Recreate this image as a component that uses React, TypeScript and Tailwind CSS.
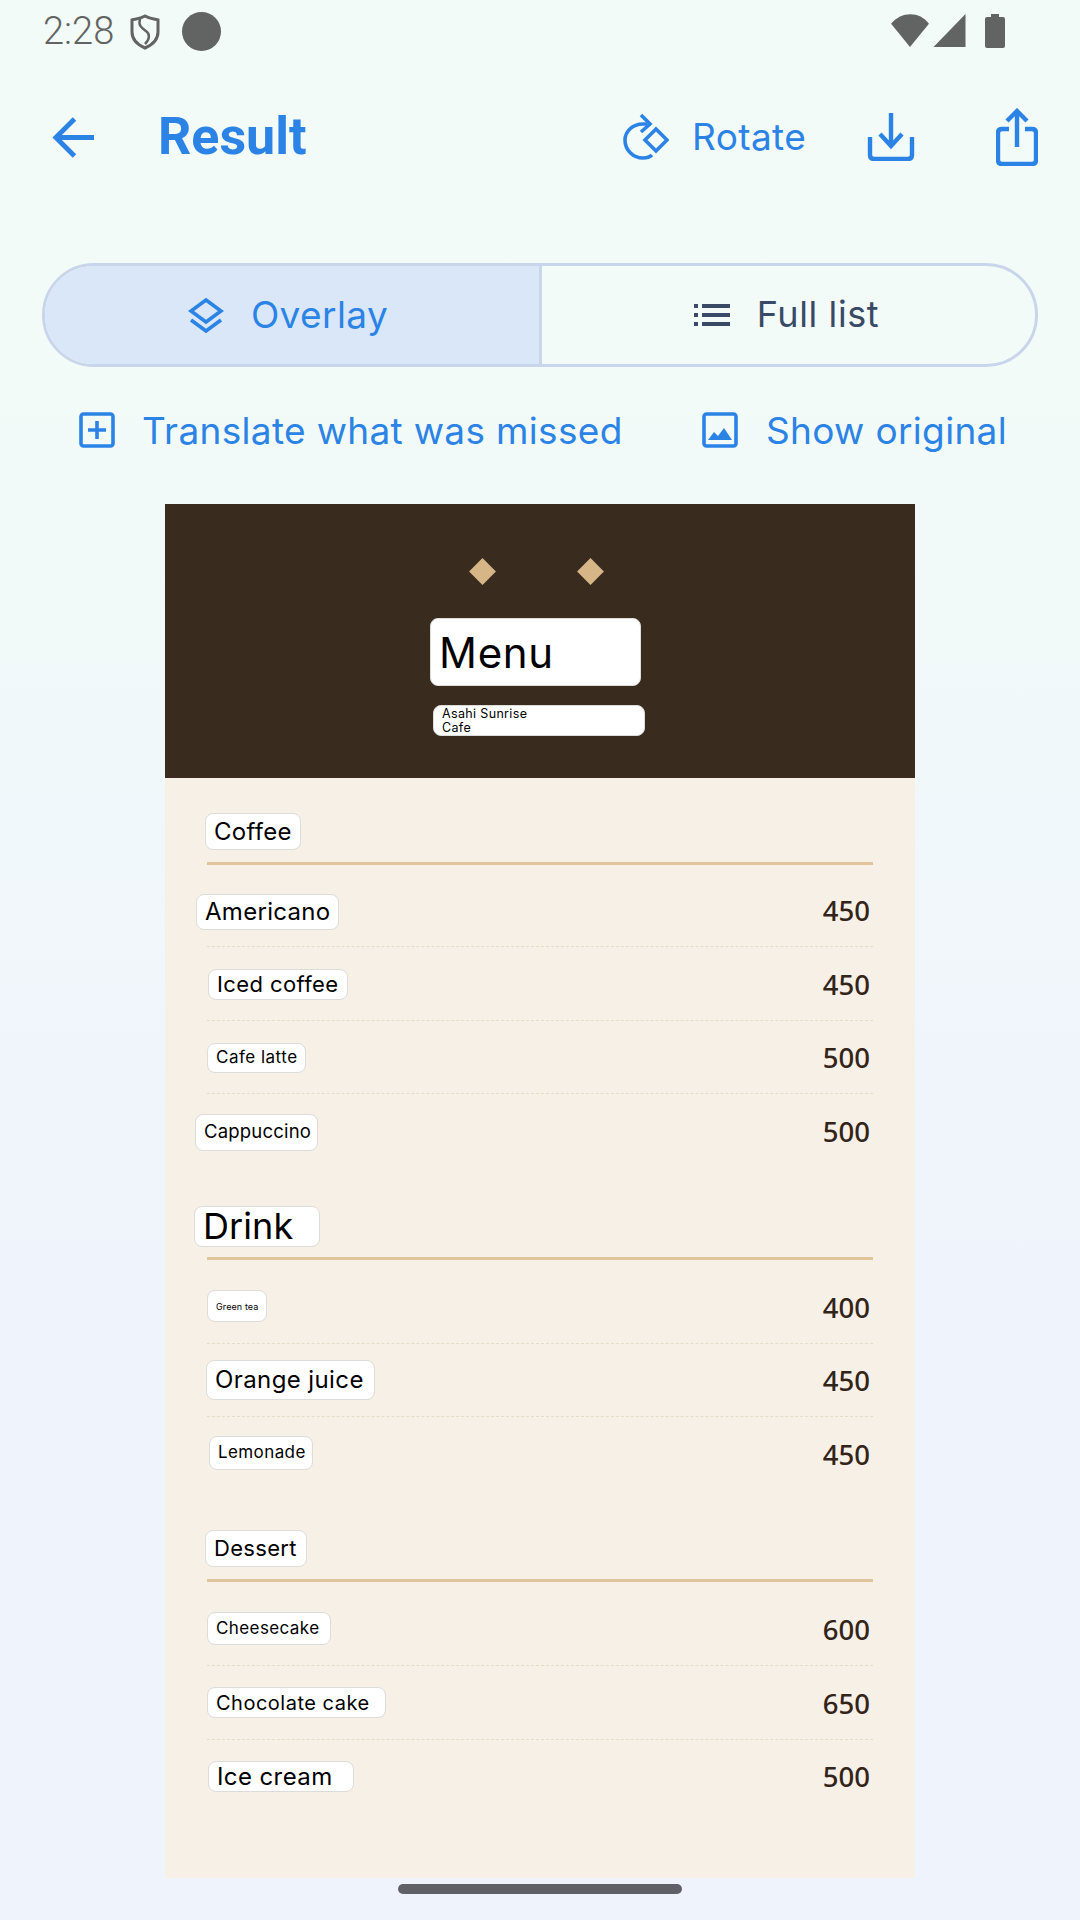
import React from "react";

const blue = "#2b83e6";

function Chip({ className, text }: { className: string; text: React.ReactNode }) {
  return (
    <div className={`bg-white border border-[#dcdcda] rounded-[8px] text-black font-['Inter',sans-serif] font-[430] pl-[8px] flex items-center whitespace-nowrap ${className}`}>
      {text}
    </div>
  );
}

function Row({ chip, price, last }: { chip: React.ReactNode; price: string; last?: boolean }) {
  return (
    <div className={`h-[73.4px] flex items-center justify-between relative ${last ? "" : "border-b border-dashed border-[#e5dcc8]"}`}>
      {chip}
      <span className="pr-[3px] pt-[2px] font-['Noto_Sans',sans-serif] font-medium text-[27.5px] text-[#33241a] leading-none">{price}</span>
    </div>
  );
}

function Title({ h, chip }: { h: string; chip: React.ReactNode }) {
  return <div className={`${h} border-b-[3px] border-[#e0c59c] flex flex-col items-start`}>{chip}</div>;
}

export default function App() {
  return (
    <div className="w-[1080px] h-[1920px] overflow-hidden flex flex-col bg-gradient-to-b from-[#f2fbf8] from-[20%] to-[#eff3fc] to-[70%] font-['Inter',sans-serif]">
      {/* status bar */}
      <div className="h-[62px] shrink-0 flex items-start pt-[14px] text-[#626463]">
        <span className="ml-[43px] w-[75px] font-['Roboto',sans-serif] font-light text-[38px] leading-[34px]">2:28</span>
        <svg className="ml-[12px]" width="30" height="36" viewBox="0 0 30 36" fill="none" stroke="#626463" strokeWidth="3">
          <path d="M15 2 C20 5 24 5 28 6 V18 C28 26 22 31 15 34 C8 31 2 26 2 18 V6 C6 5 10 5 15 2Z" />
          <path d="M10 5 C8 12 12 14 16 17 C20 20 20 25 15 30" strokeWidth="2.5" />
        </svg>
        <div className="ml-[22px] -mt-[2px] w-[39px] h-[39px] rounded-full bg-[#626463]" />
        <div className="flex-1" />
        <svg width="39" height="33" viewBox="0 0 40 34"><path d="M0 10 C11 -3 29 -3 39 10 L19.5 34Z" fill="#626463" /></svg>
        <svg width="33" height="33" viewBox="0 0 32 33" className="ml-[3px]"><path d="M32 0V33H0Z" fill="#626463" /></svg>
        <svg width="20" height="34" viewBox="0 0 20 34" className="ml-[19px] mr-[75px]"><path d="M6 0H14V3H18Q20 3 20 5V32Q20 34 18 34H2Q0 34 0 32V5Q0 3 2 3H6Z" fill="#626463" /></svg>
      </div>

      {/* toolbar */}
      <div className="h-[150px] shrink-0 flex items-center">
        <svg className="ml-[52px] shrink-0" width="43" height="43" viewBox="0 0 44 44" fill="none" stroke={blue} strokeWidth="5">
          <path d="M43 22H4M23 3 4 22 23 41" />
        </svg>
        <span className="ml-[63px] w-[151px] font-['Roboto',sans-serif] font-bold text-[52px] leading-none text-[#2b83e6]">Result</span>
        <svg className="ml-[314px] shrink-0" width="46" height="48" viewBox="0 0 46 48" fill="none" stroke={blue} strokeWidth="3.6">
          <path d="M24 11H20C9 11 2 19 2 27C2 37 10 45 20 45C24 45 27 44 29 42" />
          <path d="M18 2 27 11 18 19" />
          <path d="M33 16 44 27 33 38 22 27Z" />
        </svg>
        <span className="ml-[23px] w-[113px] pb-[2px] text-[37px] font-[430] tracking-[0.4px] text-[#2b83e6] leading-none whitespace-nowrap">Rotate</span>
        <svg className="ml-[62px] shrink-0" width="48" height="48" viewBox="0 0 46 48" fill="none" stroke={blue} strokeWidth="4.4">
          <path d="M23 0V33M12 21 23 33 34 21" />
          <path d="M2 24V42Q2 46 6 46H40Q44 46 44 42V24" />
        </svg>
        <svg className="ml-[81px] shrink-0" width="42" height="58" viewBox="0 0 42 58" fill="none" stroke={blue} strokeWidth="4.4">
          <path d="M21 39V3M11 13 21 3 31 13" />
          <path d="M13 21H6Q2 21 2 25V52Q2 56 6 56H36Q40 56 40 52V25Q40 21 36 21H29" />
        </svg>
      </div>

      {/* segmented toggle */}
      <div className="mt-[51px] ml-[42px] w-[996px] h-[104px] shrink-0 rounded-full border-[3px] border-[#c9d5ea] flex overflow-hidden">
        <div className="w-[497px] bg-[#dae7f9] border-r-[3px] border-[#c9d5ea] flex items-center justify-center gap-[27px] pr-[8px]">
          <svg width="36" height="37" viewBox="0 0 36 37" fill="none" stroke={blue} strokeWidth="3.6">
            <path d="M18 3 33 14 18 25 3 14Z" />
            <path d="M3 23 18 34 33 23" />
          </svg>
          <span className="pb-[2px] text-[37px] text-[#2b83e6] font-[430] tracking-[0.4px] leading-none">Overlay</span>
        </div>
        <div className="flex-1 flex items-center justify-center gap-[27px] pr-[4px]">
          <svg width="36" height="22" viewBox="0 0 36 22" fill="#3a4a66">
            <path d="M0 0H4V4H0ZM0 9H4V13H0ZM0 18H4V22H0ZM8 0H36V4H8ZM8 9H36V13H8ZM8 18H36V22H8Z" />
          </svg>
          <span className="pb-[2px] text-[36px] text-[#3a4a66] font-[430] tracking-[0.6px] leading-none">Full list</span>
        </div>
      </div>

      {/* links */}
      <div className="h-[128px] shrink-0 flex items-center -mt-[1px]">
        <svg className="ml-[79px] shrink-0" width="36" height="36" viewBox="0 0 36 36" fill="none" stroke={blue} strokeWidth="3.6">
          <rect x="2" y="2" width="32" height="32" rx="2.5" />
          <path d="M18 9V27M9 18H27" />
        </svg>
        <span className="ml-[27px] w-[560px] text-[37px] font-[430] tracking-[0.33px] text-[#2b83e6] leading-none whitespace-nowrap">Translate what was missed</span>
        <svg className="shrink-0" width="36" height="36" viewBox="0 0 36 36" fill="none" stroke={blue} strokeWidth="3.6">
          <rect x="2" y="2" width="32" height="32" rx="2.5" />
          <path d="M6 28 12 20 16 24 22 16 30 28Z" fill={blue} stroke="none" />
        </svg>
        <span className="ml-[28px] text-[37px] font-[430] tracking-[0.33px] text-[#2b83e6] leading-none whitespace-nowrap">Show original</span>
      </div>

      {/* translated menu picture */}
      <div className="mt-[10px] ml-[165px] w-[750px] h-[1374px] shrink-0 bg-[#f7f0e6] flex flex-col">
        <div className="h-[274px] shrink-0 bg-[#3a2b1f] flex flex-col items-start pt-[58px]">
          <div className="ml-[308px] flex gap-[89px]">
            <div className="w-[19px] h-[19px] rotate-45 bg-[#d6b686]" />
            <div className="w-[19px] h-[19px] rotate-45 bg-[#d6b686]" />
          </div>
          <Chip className="ml-[265px] mt-[37px] w-[211px] h-[68px] text-[42px] tracking-[0.7px]" text="Menu" />
          <Chip className="ml-[268px] mt-[19px] w-[212px] h-[31px] text-[12.5px] leading-[14px] tracking-[0.35px] pt-[1px]" text={<span>Asahi Sunrise<br />Cafe</span>} />
        </div>

        <div className="px-[42px]">
          <Title h="h-[87px] pt-[36px] mb-[9px]" chip={<Chip className="-ml-[2px] w-[96px] h-[37px] text-[24px] tracking-[0.3px] -mt-[1px]" text="Coffee" />} />
          <Row price="450" chip={<Chip className="-ml-[11px] mt-[4px] w-[143px] h-[36px] text-[24px] tracking-[0.3px]" text="Americano" />} />
          <Row price="450" chip={<Chip className="ml-[1px] mt-[1px] w-[140px] h-[31px] text-[22px] tracking-[0.4px]" text="Iced coffee" />} />
          <Row price="500" chip={<Chip className="mt-[2px] w-[99px] h-[30px] text-[17px] tracking-[0.5px]" text="Cafe latte" />} />
          <Row last price="500" chip={<Chip className="-ml-[12px] mt-[3px] w-[123px] h-[37px] text-[18.5px] tracking-[0.2px]" text="Cappuccino" />} />

          <Title h="h-[92px] pt-[38px] mb-[11px]" chip={<Chip className="-ml-[13px] w-[126px] h-[41px] text-[36px] tracking-[0.1px]" text="Drink" />} />
          <Row price="400" chip={<Chip className="-mt-[1px] w-[60px] h-[32px] text-[9px] tracking-[0.1px]" text="Green tea" />} />
          <Row price="450" chip={<Chip className="-ml-[1px] mt-[0px] w-[169px] h-[40px] text-[24px] tracking-[0.4px]" text="Orange juice" />} />
          <Row last price="450" chip={<Chip className="ml-[2px] -mt-[3px] w-[104px] h-[34px] text-[17px] tracking-[0.4px]" text="Lemonade" />} />

          <Title h="h-[91px] pt-[39px] mb-[11px]" chip={<Chip className="-ml-[2px] w-[102px] h-[37px] text-[22px] tracking-[0.3px]" text="Dessert" />} />
          <Row price="600" chip={<Chip className="-mt-[1px] w-[124px] h-[33px] text-[17px] tracking-[0.4px]" text="Cheesecake" />} />
          <Row price="650" chip={<Chip className="mt-[1px] w-[179px] h-[31px] text-[20px] tracking-[0.5px]" text="Chocolate cake" />} />
          <Row last price="500" chip={<Chip className="ml-[1px] mt-[1px] w-[146px] h-[31px] text-[24px] tracking-[0.4px]" text="Ice cream" />} />
        </div>
      </div>

      {/* gesture bar */}
      <div className="mt-[6px] ml-[398px] w-[284px] h-[10px] shrink-0 rounded-full bg-[#5f6166]" />
    </div>
  );
}
